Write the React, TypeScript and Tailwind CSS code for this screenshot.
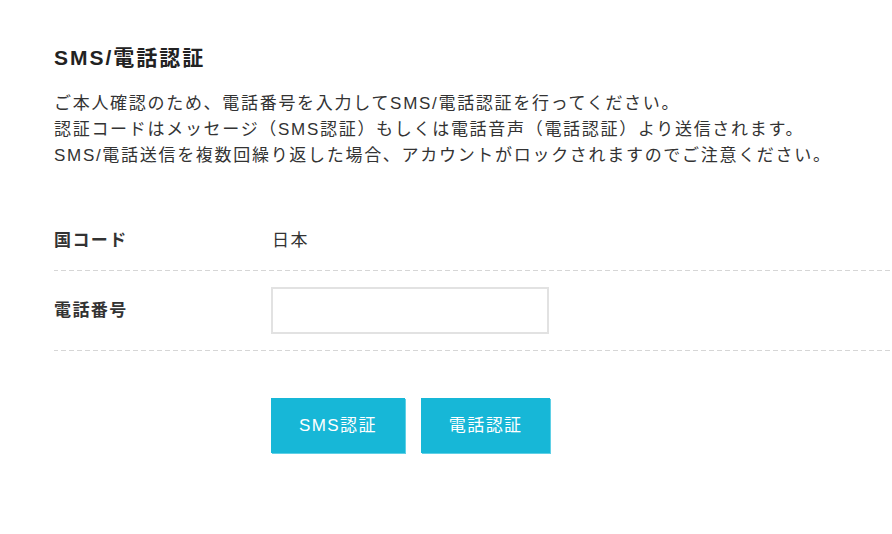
const font = "font-['Liberation_Sans','Noto_Sans_CJK_JP',sans-serif]";

function Row({ label, children }: { label: string; children: React.ReactNode }) {
  return (
    <div className="flex items-center pt-4 pb-[17px] bg-[linear-gradient(to_right,#d6d6d6_5px,transparent_5px)] bg-[length:8px_1px] bg-repeat-x bg-bottom">
      <div className="w-[218px] shrink-0 text-[17px] font-bold leading-[26px] tracking-[1.4px] text-[#333]">{label}</div>
      <div className="flex-1 leading-[26px]">{children}</div>
    </div>
  );
}

export default function App() {
  return (
    <div className={`${font} min-h-[534px] bg-white pl-[54px] pt-[43px] tracking-[1.7px] text-[#333]`}>
      <h1 className="text-[21px] font-bold leading-[30px] tracking-[2px] text-[#222]">SMS/電話認証</h1>

      <div className="mt-[18px] text-[17px] leading-[25.8px]">
        <p>ご本人確認のため、電話番号を入力してSMS/電話認証を行ってください。</p>
        <p>認証コードはメッセージ（SMS認証）もしくは電話音声（電話認証）より送信されます。</p>
        <p className="whitespace-nowrap">SMS/電話送信を複数回繰り返した場合、アカウントがロックされますのでご注意ください。</p>
      </div>

      <div className="mt-[44px]">
        <Row label="国コード">
          <span className="text-[17px] tracking-[1.4px]">日本</span>
        </Row>
        <Row label="電話番号">
          <input
            type="tel"
            className="block h-[47px] w-[278px] -ml-[1px] border-2 border-[#e2e2e2] bg-white px-3 outline-none"
          />
        </Row>
      </div>

      <div className="mt-[47px] flex gap-4 pl-[217px]">
        <button className="h-[55px] px-[28px] bg-[#17b7d7] text-[17px] text-white tracking-[1.4px] shadow-[1px_1px_0_#5fd0e6]">
          SMS認証
        </button>
        <button className="h-[55px] px-[28px] bg-[#17b7d7] text-[17px] text-white tracking-[1.4px] shadow-[1px_1px_0_#5fd0e6]">
          電話認証
        </button>
      </div>
    </div>
  );
}
